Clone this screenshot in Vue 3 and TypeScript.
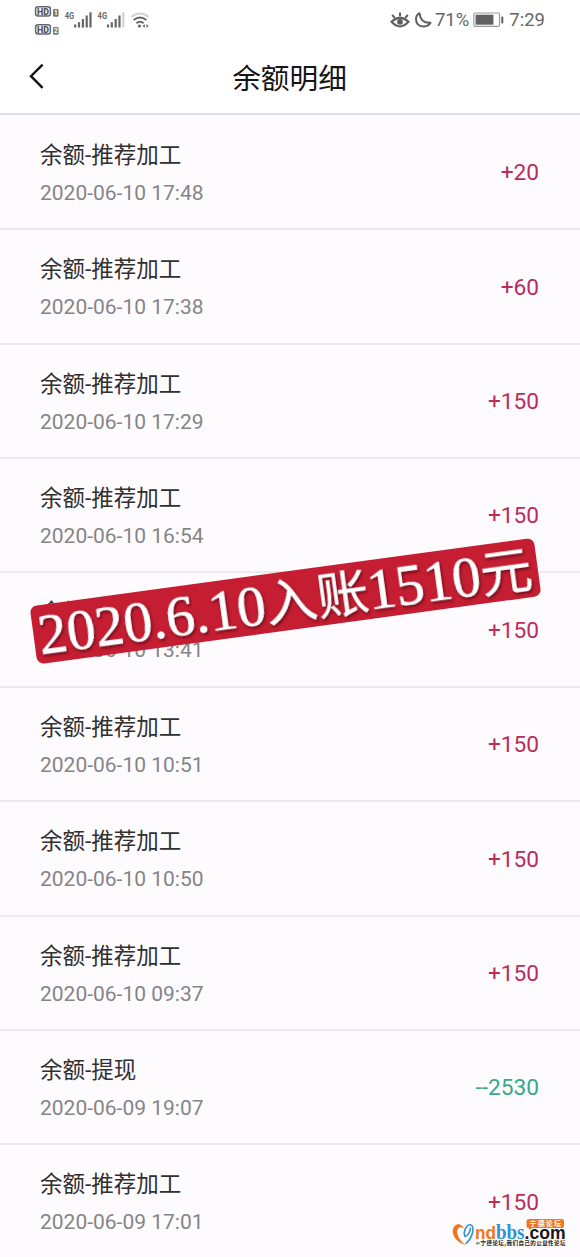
<script setup lang="ts">
interface Entry {
  title: string
  time: string
  amount: string
  out?: boolean
}

const income = '余额-推荐加工'
const entries: Entry[] = [
  { title: income, time: '2020-06-10 17:48', amount: '+20' },
  { title: income, time: '2020-06-10 17:38', amount: '+60' },
  { title: income, time: '2020-06-10 17:29', amount: '+150' },
  { title: income, time: '2020-06-10 16:54', amount: '+150' },
  { title: income, time: '2020-06-10 13:41', amount: '+150' },
  { title: income, time: '2020-06-10 10:51', amount: '+150' },
  { title: income, time: '2020-06-10 10:50', amount: '+150' },
  { title: income, time: '2020-06-10 09:37', amount: '+150' },
  { title: '余额-提现', time: '2020-06-09 19:07', amount: '--2530', out: true },
  { title: income, time: '2020-06-09 17:01', amount: '+150' },
]
</script>

<template>
  <div class="screen">
    <div class="status">
      <svg class="signals" width="120" height="36" viewBox="32 2 120 36">
        <g class="hd">
          <rect x="35.600" y="6.800" width="14.800" height="9.200" rx="2.400" />
          <rect x="35.600" y="24.800" width="14.800" height="9.200" rx="2.400" />
          <text x="37" y="14.700" textLength="12" lengthAdjust="spacingAndGlyphs">HD</text>
          <text x="37" y="32.700" textLength="12" lengthAdjust="spacingAndGlyphs">HD</text>
        </g>
        <g class="sim">
          <rect x="53" y="9" width="5.600" height="7.800" rx="1.400" />
          <rect x="53" y="27" width="5.600" height="7.800" rx="1.400" />
          <text x="54" y="15.400">1</text>
          <text x="54" y="33.400">2</text>
        </g>
        <g class="net">
          <text x="64.800" y="19" textLength="9.400" lengthAdjust="spacingAndGlyphs">4G</text>
          <text x="97.600" y="19" textLength="9.400" lengthAdjust="spacingAndGlyphs">4G</text>
        </g>
        <g class="bars">
          <path d="M75.200 27.600v-3M79 27.600v-5.400M82.900 27.600v-8.600M86.700 27.600v-12M90.500 27.600v-15.400" />
          <path d="M108 27.600v-3M111.800 27.600v-5.400M115.700 27.600v-8.600M119.500 27.600v-12" />
          <path class="weak" d="M123.300 27.600v-15.400" />
        </g>
        <g class="wifi">
          <path class="weak" d="M131.300 17Q140 10 148.700 17" />
          <path d="M133.600 20Q140 14.800 146.400 20" />
          <path d="M136.400 23.300Q140 20.200 143.600 23.300" />
          <circle cx="139.400" cy="26" r="1.600" />
          <path class="tiny" d="M144.800 24l-2.200 2 2.200 2zM146.400 24l2.200 2-2.200 2z" />
        </g>
      </svg>
      <div class="right">
        <svg width="42" height="20" viewBox="391 10 42 20">
          <g class="eye">
            <path d="M392.500 21.800Q401 14 409.500 21.800Q401 31 392.500 21.800z" />
            <path d="M401 16.500v-4M395.800 18l-2.600-3.200M406.200 18l2.600-3.200" />
            <circle cx="401" cy="21.800" r="2.900" />
          </g>
          <path class="moon" d="M420.500 13.200Q417 15 417 19.200Q417.300 26.500 425 26.600Q429.500 26.200 431.500 22.800Q421.500 23.500 420.500 13.200z" />
        </svg>
        <span class="pct">71%</span>
        <svg class="battery" width="32" height="16" viewBox="0 0 32 16">
          <rect class="case" x=".9" y="1" width="25.600" height="13.400" rx="1.500" />
          <rect class="fill" x="2.600" y="2.700" width="17.800" height="10" />
          <rect class="fill" x="28.300" y="4.400" width="2" height="7" rx=".6" />
        </svg>
        <span class="clock">7:29</span>
      </div>
    </div>

    <header class="nav">
      <svg class="back" width="20" height="30" viewBox="0 0 20 30">
        <path d="M14.600 3.600L3 15.200L14.600 26.800" />
      </svg>
      <h1>余额明细</h1>
    </header>

    <main class="list">
      <section v-for="(e, i) in entries" :key="i" class="row">
        <div class="info">
          <div class="title">{{ e.title }}</div>
          <div class="time">{{ e.time }}</div>
        </div>
        <div class="amount" :class="{ out: e.out }">{{ e.amount }}</div>
      </section>
    </main>

    <svg class="banner" width="530" height="140" viewBox="20 530 530 140">
      <g transform="rotate(-7.750 285.500 601)">
        <rect x="31.200" y="571.800" width="508.600" height="58.600" rx="7" />
        <g class="label">
          <text class="num" x="36" y="621" textLength="229" lengthAdjust="spacingAndGlyphs">2020.6.10</text>
          <text class="han" x="265" y="619.500" textLength="104" lengthAdjust="spacingAndGlyphs">入账</text>
          <text class="num" x="368" y="621" textLength="114" lengthAdjust="spacingAndGlyphs">1510</text>
          <text class="han" x="482" y="619.500" textLength="52" lengthAdjust="spacingAndGlyphs">元</text>
        </g>
      </g>
    </svg>

    <svg class="mark" width="120" height="32" viewBox="450 1217 120 32">
      <path class="heart-a" d="M465.500 1245C458 1243 452.500 1237 452.800 1230.500C453.300 1223.500 461 1221.500 464.500 1229C461 1225.500 456.800 1227.500 457.300 1232.500C457.800 1237.500 461.500 1242 465.500 1245z" />
      <path class="heart-b" d="M465.500 1244C473.500 1237 475 1225.500 470.500 1224.800C466.500 1224.500 462.800 1231.500 465 1236.500C468 1236 470.500 1231 470.500 1227.500" />
      <g class="site">
        <text x="475" y="1239" fill="#ef761d" textLength="21" lengthAdjust="spacingAndGlyphs">nd</text>
        <text class="slab" x="496" y="1239" fill="#2e93d1" textLength="28.500" lengthAdjust="spacingAndGlyphs">bbs</text>
        <text x="524.500" y="1239" fill="#171717" textLength="41" lengthAdjust="spacingAndGlyphs">.com</text>
      </g>
      <path class="bubble" d="M529 1219h33q2 0 2 2v5q0 2-2 2h-30l-3 2.200v-2.200q-2.500 0-2.500-2v-5q0-2 2.500-2z" />
      <text class="tag" x="529.500" y="1226.200" textLength="31.500" lengthAdjust="spacing">宁德论坛</text>
      <path class="leaf" d="M475.500 1244.300l2-3 .5 2 3-2.300-2 3.300z" />
      <text class="slogan" x="480.500" y="1244.600" textLength="85" lengthAdjust="spacing">宁德论坛,我们自己的公益性论坛</text>
    </svg>
  </div>
</template>

<style>
body {
  margin: 0;
  background: #fefbfe;
}
</style>

<style scoped>
.screen {
  position: relative;
  width: 580px;
  height: 1257px;
  overflow: hidden;
  background: #fefbfe;
  font-family: Roboto, "Noto Sans CJK SC", sans-serif;
}
.status {
  display: flex;
  justify-content: space-between;
  align-items: flex-start;
  height: 40px;
  padding: 0 35px 0 32px;
  box-sizing: border-box;
  background: #fff;
  color: #666;
}
.signals {
  margin-top: 2px;
}
.hd rect {
  fill: none;
  stroke: #666;
  stroke-width: 1.500;
}
.hd text {
  font: 900 8.800px Roboto, sans-serif;
  fill: #555;
}
.sim rect {
  fill: #777;
}
.sim text {
  font: 700 6.500px Roboto, sans-serif;
  fill: #fff;
}
.net text {
  font: 700 9.500px Roboto, sans-serif;
  fill: #666;
}
.bars path {
  stroke: #666;
  stroke-width: 2.200;
}
.wifi path {
  fill: none;
  stroke: #666;
  stroke-width: 1.900;
}
.bars .weak,
.wifi .weak {
  stroke: #d2d2d2;
}
.wifi circle,
.wifi .tiny {
  fill: #666;
  stroke: none;
}
.right {
  display: flex;
  align-items: center;
  height: 40px;
}
.eye path {
  fill: none;
  stroke: #606060;
  stroke-width: 2;
}
.eye circle {
  fill: #606060;
}
.moon {
  fill: none;
  stroke: #606060;
  stroke-width: 2;
  stroke-linejoin: round;
}
.pct {
  margin-left: 3px;
  font-size: 18.500px;
}
.battery {
  margin-left: 4px;
}
.case {
  fill: none;
  stroke: #999;
  stroke-width: 1.200;
}
.fill {
  fill: #606060;
}
.clock {
  margin-left: 4px;
  font-size: 18.500px;
}
.nav {
  display: flex;
  justify-content: center;
  align-items: center;
  position: relative;
  height: 75px;
  padding-right: 1px;
  box-sizing: border-box;
  background: #fff;
  border-bottom: 2px solid #e0e1e8;
}
.back {
  position: absolute;
  left: 28px;
  top: 21px;
}
.back path {
  fill: none;
  stroke: #111;
  stroke-width: 2.400;
}
h1 {
  margin: 5px 0 0;
  font-size: 28.700px;
  line-height: 40px;
  font-weight: 400;
  color: #151515;
}
.list {
  padding-top: .8px;
}
.row {
  display: flex;
  justify-content: space-between;
  align-items: center;
  height: 114.400px;
  padding: 1.600px 41px 0 40px;
  box-sizing: border-box;
  border-bottom: 2px solid #e8eaed;
}
.info {
  padding-top: 2px;
}
.title {
  font-size: 22.500px;
  line-height: 38px;
  color: #303030;
}
.time {
  font-size: 21px;
  line-height: 38px;
  color: #858487;
}
.amount {
  font-size: 22.700px;
  color: #bb2b5b;
}
.amount.out {
  color: #36a982;
}
.banner {
  position: absolute;
  left: 20px;
  top: 530px;
}
.banner rect {
  fill: #c51d31;
}
.label {
  fill: #fff;
  stroke: #fff;
  filter: drop-shadow(1px 2px 1.500px rgba(60, 0, 10, .65));
}
.num {
  font-family: "Liberation Serif", serif;
  font-size: 57px;
  stroke-width: .7;
}
.han {
  font-family: "Noto Sans CJK SC", sans-serif;
  font-size: 50px;
  stroke-width: .4;
}
.mark {
  position: absolute;
  left: 450px;
  top: 1217px;
}
.heart-a {
  fill: #ef761d;
}
.heart-b {
  fill: none;
  stroke: #2e93d1;
  stroke-width: 1.600;
}
.site text {
  font: 700 18.500px "Liberation Sans", sans-serif;
}
.site .slab {
  font: 700 20px "Liberation Serif", serif;
}
.bubble {
  fill: #ef761d;
}
.tag {
  font: 700 7px "Noto Sans CJK SC", sans-serif;
  fill: #fff;
}
.leaf {
  fill: #45a047;
}
.slogan {
  font: 700 5.500px "Noto Sans CJK SC", sans-serif;
  fill: #222;
}
</style>
